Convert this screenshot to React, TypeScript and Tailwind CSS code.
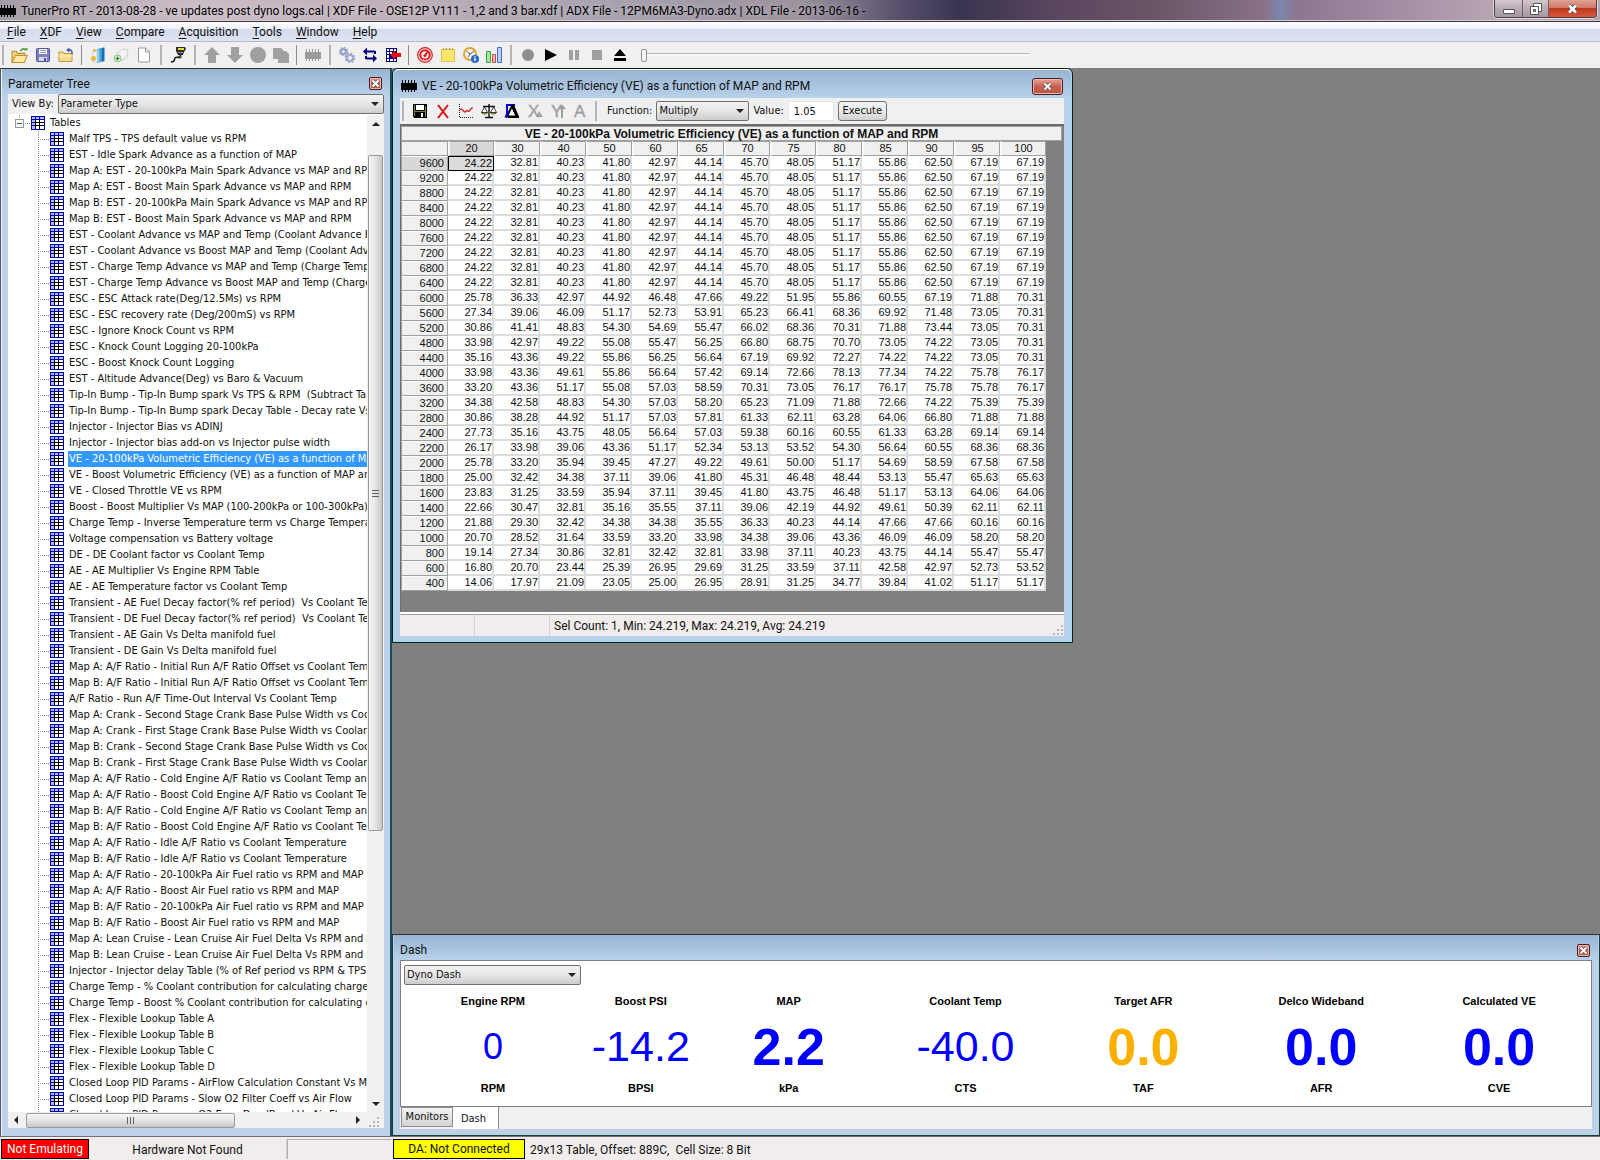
import type { ReactNode } from "react";

const TREE_ITEMS = [
  "Malf TPS - TPS default value vs RPM",
  "EST - Idle Spark Advance as a function of MAP",
  "Map A: EST - 20-100kPa Main Spark Advance vs MAP and RPM",
  "Map A: EST - Boost Main Spark Advance vs MAP and RPM",
  "Map B: EST - 20-100kPa Main Spark Advance vs MAP and RPM",
  "Map B: EST - Boost Main Spark Advance vs MAP and RPM",
  "EST - Coolant Advance vs MAP and Temp (Coolant Advance Bias)",
  "EST - Coolant Advance vs Boost MAP and Temp (Coolant Advance)",
  "EST - Charge Temp Advance vs MAP and Temp (Charge Temp Bias)",
  "EST - Charge Temp Advance vs Boost MAP and Temp (Charge Temp)",
  "ESC - ESC Attack rate(Deg/12.5Ms) vs RPM",
  "ESC - ESC recovery rate (Deg/200mS) vs RPM",
  "ESC - Ignore Knock Count vs RPM",
  "ESC - Knock Count Logging 20-100kPa",
  "ESC - Boost Knock Count Logging",
  "EST - Altitude Advance(Deg) vs Baro & Vacuum",
  "Tip-In Bump - Tip-In Bump spark Vs TPS & RPM  (Subtract Table)",
  "Tip-In Bump - Tip-In Bump spark Decay Table - Decay rate Vs TPS",
  "Injector - Injector Bias vs ADINJ",
  "Injector - Injector bias add-on vs Injector pulse width",
  "VE - 20-100kPa Volumetric Efficiency (VE) as a function of MAP",
  "VE - Boost Volumetric Efficiency (VE) as a function of MAP and",
  "VE - Closed Throttle VE vs RPM",
  "Boost - Boost Multiplier Vs MAP (100-200kPa or 100-300kPa)",
  "Charge Temp - Inverse Temperature term vs Charge Temperature",
  "Voltage compensation vs Battery voltage",
  "DE - DE Coolant factor vs Coolant Temp",
  "AE - AE Multiplier Vs Engine RPM Table",
  "AE - AE Temperature factor vs Coolant Temp",
  "Transient - AE Fuel Decay factor(% ref period)  Vs Coolant Temp",
  "Transient - DE Fuel Decay factor(% ref period)  Vs Coolant Temp",
  "Transient - AE Gain Vs Delta manifold fuel",
  "Transient - DE Gain Vs Delta manifold fuel",
  "Map A: A/F Ratio - Initial Run A/F Ratio Offset vs Coolant Temp",
  "Map B: A/F Ratio - Initial Run A/F Ratio Offset vs Coolant Temp",
  "A/F Ratio - Run A/F Time-Out Interval Vs Coolant Temp",
  "Map A: Crank - Second Stage Crank Base Pulse Width vs Coolant",
  "Map A: Crank - First Stage Crank Base Pulse Width vs Coolant",
  "Map B: Crank - Second Stage Crank Base Pulse Width vs Coolant",
  "Map B: Crank - First Stage Crank Base Pulse Width vs Coolant",
  "Map A: A/F Ratio - Cold Engine A/F Ratio vs Coolant Temp and",
  "Map A: A/F Ratio - Boost Cold Engine A/F Ratio vs Coolant Temp",
  "Map B: A/F Ratio - Cold Engine A/F Ratio vs Coolant Temp and",
  "Map B: A/F Ratio - Boost Cold Engine A/F Ratio vs Coolant Temp",
  "Map A: A/F Ratio - Idle A/F Ratio vs Coolant Temperature",
  "Map B: A/F Ratio - Idle A/F Ratio vs Coolant Temperature",
  "Map A: A/F Ratio - 20-100kPa Air Fuel ratio vs RPM and MAP",
  "Map A: A/F Ratio - Boost Air Fuel ratio vs RPM and MAP",
  "Map B: A/F Ratio - 20-100kPa Air Fuel ratio vs RPM and MAP",
  "Map B: A/F Ratio - Boost Air Fuel ratio vs RPM and MAP",
  "Map A: Lean Cruise - Lean Cruise Air Fuel Delta Vs RPM and MAP",
  "Map B: Lean Cruise - Lean Cruise Air Fuel Delta Vs RPM and MAP",
  "Injector - Injector delay Table (% of Ref period vs RPM & TPS)",
  "Charge Temp - % Coolant contribution for calculating charge temp",
  "Charge Temp - Boost % Coolant contribution for calculating charge",
  "Flex - Flexible Lookup Table A",
  "Flex - Flexible Lookup Table B",
  "Flex - Flexible Lookup Table C",
  "Flex - Flexible Lookup Table D",
  "Closed Loop PID Params - AirFlow Calculation Constant Vs MAP",
  "Closed Loop PID Params - Slow O2 Filter Coeff vs Air Flow",
  "Closed Loop PID Params - O2 Error DeadBand Vs Air Flow",
];
const SELECTED_ITEM = 20;

const MAP_AXIS = [20, 30, 40, 50, 60, 65, 70, 75, 80, 85, 90, 95, 100];

const LOW_LOAD = "24.22 32.81 40.23 41.80 42.97 44.14 45.70 48.05 51.17 55.86 62.50 67.19 67.19";
const VE_ROWS: [number, string][] = [
  [9600, LOW_LOAD],
  [9200, LOW_LOAD],
  [8800, LOW_LOAD],
  [8400, LOW_LOAD],
  [8000, LOW_LOAD],
  [7600, LOW_LOAD],
  [7200, LOW_LOAD],
  [6800, LOW_LOAD],
  [6400, LOW_LOAD],
  [6000, "25.78 36.33 42.97 44.92 46.48 47.66 49.22 51.95 55.86 60.55 67.19 71.88 70.31"],
  [5600, "27.34 39.06 46.09 51.17 52.73 53.91 65.23 66.41 68.36 69.92 71.48 73.05 70.31"],
  [5200, "30.86 41.41 48.83 54.30 54.69 55.47 66.02 68.36 70.31 71.88 73.44 73.05 70.31"],
  [4800, "33.98 42.97 49.22 55.08 55.47 56.25 66.80 68.75 70.70 73.05 74.22 73.05 70.31"],
  [4400, "35.16 43.36 49.22 55.86 56.25 56.64 67.19 69.92 72.27 74.22 74.22 73.05 70.31"],
  [4000, "33.98 43.36 49.61 55.86 56.64 57.42 69.14 72.66 78.13 77.34 74.22 75.78 76.17"],
  [3600, "33.20 43.36 51.17 55.08 57.03 58.59 70.31 73.05 76.17 76.17 75.78 75.78 76.17"],
  [3200, "34.38 42.58 48.83 54.30 57.03 58.20 65.23 71.09 71.88 72.66 74.22 75.39 75.39"],
  [2800, "30.86 38.28 44.92 51.17 57.03 57.81 61.33 62.11 63.28 64.06 66.80 71.88 71.88"],
  [2400, "27.73 35.16 43.75 48.05 56.64 57.03 59.38 60.16 60.55 61.33 63.28 69.14 69.14"],
  [2200, "26.17 33.98 39.06 43.36 51.17 52.34 53.13 53.52 54.30 56.64 60.55 68.36 68.36"],
  [2000, "25.78 33.20 35.94 39.45 47.27 49.22 49.61 50.00 51.17 54.69 58.59 67.58 67.58"],
  [1800, "25.00 32.42 34.38 37.11 39.06 41.80 45.31 46.48 48.44 53.13 55.47 65.63 65.63"],
  [1600, "23.83 31.25 33.59 35.94 37.11 39.45 41.80 43.75 46.48 51.17 53.13 64.06 64.06"],
  [1400, "22.66 30.47 32.81 35.16 35.55 37.11 39.06 42.19 44.92 49.61 50.39 62.11 62.11"],
  [1200, "21.88 29.30 32.42 34.38 34.38 35.55 36.33 40.23 44.14 47.66 47.66 60.16 60.16"],
  [1000, "20.70 28.52 31.64 33.59 33.20 33.98 34.38 39.06 43.36 46.09 46.09 58.20 58.20"],
  [800, "19.14 27.34 30.86 32.81 32.42 32.81 33.98 37.11 40.23 43.75 44.14 55.47 55.47"],
  [600, "16.80 20.70 23.44 25.39 26.95 29.69 31.25 33.59 37.11 42.58 42.97 52.73 53.52"],
  [400, "14.06 17.97 21.09 23.05 25.00 26.95 28.91 31.25 34.77 39.84 41.02 51.17 51.17"],
];

const SEGOE = "font-[Roboto,'Open_Sans',sans-serif] text-[12px]";
const TAHOMA = "font-['DejaVu_Sans_Condensed','DejaVu_Sans',sans-serif] text-[11px]";

/* ---------- icons ---------- */

function Icon({ children, crisp = true, size = 16 }: { children: ReactNode; crisp?: boolean; size?: number }) {
  return (
    <svg width={size} height={size} viewBox="0 0 16 16" fill="none" shapeRendering={crisp ? "crispEdges" : "auto"} aria-hidden="true" className="shrink-0">
      {children}
    </svg>
  );
}

function ChipIcon({ color = "#000" }: { color?: string }) {
  return (
    <Icon>
      <path fill={color} d="M0 5h16v7H0zM1 2h1v3H1zM4 2h1v3H4zM7 2h1v3H7zM10 2h1v3h-1zM13 2h1v3h-1zM1 12h1v2H1zM4 12h1v2H4zM7 12h1v2H7zM10 12h1v2h-1zM13 12h1v2h-1z" />
    </Icon>
  );
}

function TableIcon() {
  return (
    <svg width="14" height="14" viewBox="0 0 14 14" shapeRendering="crispEdges" aria-hidden="true" className="shrink-0">
      <path fill="#0000a8" d="M0 0h14v14H0z" />
      <path fill="#b4bcf4" d="M1 1h3v2H1zM5 1h3v2H5zM9 1h4v2H9zM1 4h3v2H1zM1 7h3v2H1zM1 10h3v3H1z" />
      <path fill="#000" d="M4 4h9v9H4z" />
      <path fill="#fff" d="M5 4h3v2H5zM9 4h4v2H9zM5 7h3v2H5zM9 7h4v2H9zM5 10h3v3H5zM9 10h4v3H9z" />
    </svg>
  );
}

function OpenFolderIcon() {
  return (
    <Icon crisp={false} size={17}>
      <path d="M1 14V4h4l1 2h7v3" fill="#f4d57c" stroke="#b98a2c" />
      <path d="M1 14.5 4 8h11.5l-3 6.5z" fill="#fde9a5" stroke="#c0912f" />
      <path d="M9 4c1-3 4-3 5-1" stroke="#3f9a3c" strokeWidth="1.5" />
      <path d="M12 3h3.500v-2.500z" fill="#3f9a3c" />
    </Icon>
  );
}

function SaveIcon() {
  return (
    <Icon crisp={false}>
      <rect x="1.500" y="1.500" width="13" height="13" rx="1" fill="#7c7fc4" stroke="#5053a0" />
      <path fill="#fff" d="M4 2h8v5H4z" />
      <path d="M5 3.500h6M5 5.500h6" stroke="#9a9ab0" />
      <path fill="#d6d8ea" d="M4 10h8v4H4z" />
      <path fill="#5053a0" d="M9 11h2v3H9z" />
    </Icon>
  );
}

function ImportFolderIcon() {
  return (
    <Icon crisp={false}>
      <path d="M1 14.500V5h4l1 1.500h8v8z" fill="#f7dd8c" stroke="#c2953a" />
      <path d="M1 9h13" stroke="#fff3c8" />
      <path d="M14 7c.5-3-1-5-4-4" stroke="#4b5aa8" strokeWidth="1.500" />
      <path fill="#4b5aa8" d="m8 3 3.500-2.500v5z" />
    </Icon>
  );
}

function BinderIcon() {
  return (
    <Icon crisp={false}>
      <path fill="#3d9ad6" d="m7 2 7-1.500V14l-7 2z" />
      <path fill="#1c6db0" d="m12 1 2.500-.500V14L12 14.800z" />
      <path fill="#8fd0f0" d="M6.500 2.500h3V15h-3z" />
      <path fill="#f3f3f3" stroke="#b5b5b5" strokeWidth=".5" d="M3 4h4v11H3z" />
      <circle cx="3.500" cy="11.500" r="2.500" fill="#f0b83c" />
      <circle cx="4.500" cy="3.500" r="1.500" fill="#f0b83c" />
    </Icon>
  );
}

function AddTagIcon() {
  return (
    <Icon crisp={false}>
      <path d="m4 7 6-5 5 1-1 7-6 4z" fill="#f2f2f2" stroke="#cacaca" />
      <circle cx="4.500" cy="11.500" r="3.500" fill="#eef7ea" stroke="#8fb886" />
      <path d="M4.500 9.500v4M2.500 11.500h4" stroke="#3f8f35" strokeWidth="1.500" />
    </Icon>
  );
}

function PageIcon() {
  return (
    <Icon crisp={false}>
      <path d="M2.500 1h7l4 4v10h-11z" fill="#fff" stroke="#9a9a9a" />
      <path d="M9.500 1v4h4" stroke="#9a9a9a" />
    </Icon>
  );
}

function CableIcon() {
  return (
    <Icon crisp={false}>
      <path fill="#2a2a2a" d="M6 0h9l1 2-2 3-1 3H8L6 4z" />
      <path fill="#f2d928" d="M8 1h6v2H8z" />
      <path fill="#999" d="M8 5h5v1H8z" />
      <path d="M10 8c1 4-4 1-5 3s0 4-4 4" stroke="#111" strokeWidth="1.500" />
      <path d="M11 8v3H8" stroke="#444" />
    </Icon>
  );
}

function GearsIcon() {
  return (
    <Icon crisp={false}>
      <circle cx="4.500" cy="4.500" r="2.500" stroke="#8d9dc4" strokeWidth="2" />
      <circle cx="4.500" cy="4.500" r="4" stroke="#8d9dc4" strokeWidth="1.500" strokeDasharray="1.600 1.500" />
      <circle cx="11" cy="11" r="3" stroke="#9daaca" strokeWidth="2" />
      <circle cx="11" cy="11" r="4.600" stroke="#8d9dc4" strokeWidth="1.500" strokeDasharray="1.800 1.800" />
    </Icon>
  );
}

function SwapIcon() {
  return (
    <Icon crisp={false}>
      <path fill="#000080" d="m1 4.500 4-4v3h8v2H5v3zM15 11.500l-4 4v-3H4v-2h7v-3z" />
      <path fill="#000080" d="M12 4h2v3h-2zM3 9h2v3H3z" />
    </Icon>
  );
}

function GridArrowIcon() {
  return (
    <Icon>
      <path fill="#000080" d="M1 1h11v14H1z" />
      <path fill="#fff" d="M2 2h2v2H2zM5 2h3v2H5zM9 2h2v2H9zM2 5h2v2H2zM2 8h2v3H2zM2 12h2v2H2zM5 12h3v2H5zM9 12h2v2H9zM5 5h2v2H5z" />
      <path fill="#f00" d="m5 8 5-5v3h6v4h-6v3z" />
    </Icon>
  );
}

function GaugeIcon() {
  return (
    <Icon crisp={false}>
      <circle cx="8" cy="8" r="7.300" stroke="#e01818" strokeWidth="1.200" />
      <circle cx="8" cy="8" r="4.700" stroke="#e01818" strokeWidth="2" />
      <path d="m7.500 9 3-4" stroke="#e01818" strokeWidth="2" />
      <circle cx="8" cy="8.500" r="1.500" fill="#e01818" />
      <path fill="#fff" d="M6 12h4v2H6z" />
      <path fill="#e01818" d="M6.500 11.500h3v2h-3z" />
    </Icon>
  );
}

function NoteIcon() {
  return (
    <Icon>
      <path fill="#f7e66a" stroke="#d8c450" d="M1.500 2.500h13v12h-13z" />
      <path fill="#a89a48" d="M3 1h1v2H3zM6 1h1v2H6zM9 1h1v2H9zM12 1h1v2h-1z" />
    </Icon>
  );
}

function ClockInfoIcon() {
  return (
    <Icon crisp={false}>
      <circle cx="7" cy="7" r="6" fill="#f4f4f4" stroke="#e3a32e" strokeWidth="2" />
      <path d="M3.500 4 7 7l4-3M7 7l-2 3" stroke="#555" />
      <circle cx="12" cy="12" r="4" fill="#2668cf" />
      <path d="M12 11v3M12 9.200v1" stroke="#fff" strokeWidth="1.500" />
    </Icon>
  );
}

function BarsIcon() {
  return (
    <Icon crisp={false}>
      <path fill="#a4e8a0" stroke="#3aa040" d="M.5 4.500h4v11h-4z" />
      <path fill="#f5b6b0" stroke="#cc4a48" d="M6.500 7.500h3v8h-3z" />
      <path fill="#b6cef8" stroke="#4a70c8" d="M11.500.500h4v15h-4z" />
    </Icon>
  );
}

function FloppyIcon() {
  return (
    <Icon>
      <path fill="#000" d="M1 1h14v14H2l-1-1z" />
      <path fill="#84842c" d="M2 2h1v11H2zM13 3h1v11h-1zM3 8h10v1H3z" />
      <path fill="#fff" d="M4 2h8v5H4zM9 10h2v4H9z" />
    </Icon>
  );
}

function TraceIcon() {
  return (
    <Icon crisp={false}>
      <path d="M1.500 1v13.500H15" stroke="#222" strokeDasharray="1 1" />
      <path d="M2 7c2-3 3 2 5 2s1-3 3-1 2-4 5-3" stroke="#d01818" strokeWidth="1.300" />
    </Icon>
  );
}

function ScalesIcon() {
  return (
    <Icon crisp={false}>
      <path d="M8 1v13M4 14.500h8M2 3.500h12" stroke="#111" strokeWidth="1.400" />
      <path d="m3.500 4-3 5.500h6zM12.500 4l-3 5.500h6z" stroke="#111" fill="#fff" strokeWidth=".800" />
      <path fill="#e6e22a" stroke="#111" strokeWidth=".700" d="M.500 9.500h6c-1 2-5 2-6 0zM9.500 9.500h6c-1 2-5 2-6 0z" />
    </Icon>
  );
}

function DeltaIcon() {
  return (
    <Icon crisp={false}>
      <path fill="#0000d8" d="M2 1h9v2H4v10H2z" />
      <path d="M3 13.500 8 3l5 10.500z" fill="#fff" stroke="#000" strokeWidth="2" />
      <path d="m8.500 2 5 12" stroke="#000" strokeWidth="3" />
      <path d="M1.500 14.500 4 9" stroke="#0000d8" strokeWidth="2" />
      <path d="M4 14h11" stroke="#000" strokeWidth="2" />
    </Icon>
  );
}

function AxisIcon({ letter, children }: { letter: string; children?: ReactNode }) {
  return (
    <Icon crisp={false}>
      <text x="1" y="14" fontSize="17" fontFamily="Liberation Sans" fill="#a0a0a0" stroke="#a0a0a0" strokeWidth=".4">
        {letter}
      </text>
      {children}
    </Icon>
  );
}

function Cross({ color, width = 2 }: { color: string; width?: number }) {
  return (
    <Icon crisp={false}>
      <path d="m3 2 10 13M13 2 3 15" stroke={color} strokeWidth={width} />
    </Icon>
  );
}

function Shape({ d, color = "#a0a0a0" }: { d: string; color?: string }) {
  return (
    <Icon crisp={false}>
      <path fill={color} d={d} />
    </Icon>
  );
}

function Caret({ d, className = "" }: { d: string; className?: string }) {
  return (
    <svg width="8" height="8" viewBox="0 0 8 8" aria-hidden="true" className={className}>
      <path d={d} fill="#222" />
    </svg>
  );
}

function SizeGrip() {
  return (
    <svg width="12" height="12" viewBox="0 0 12 12" shapeRendering="crispEdges" aria-hidden="true">
      <path fill="#b4b4b4" d="M9 1h2v2H9zM5 5h2v2H5zM9 5h2v2H9zM1 9h2v2H1zM5 9h2v2H5zM9 9h2v2H9z" />
    </svg>
  );
}

/* ---------- shared controls ---------- */

function ToolButton({ label, children }: { label: string; children: ReactNode }) {
  return (
    <button type="button" aria-label={label} className="flex h-5 w-[23px] items-center justify-center">
      {children}
    </button>
  );
}

function ToolGroup({ children }: { children: ReactNode }) {
  return (
    <div className="flex h-5 items-center border-l-2 border-[#b4b4b4] pl-1">{children}</div>
  );
}

function Separator() {
  return (
    <div className="flex w-[9px] justify-center">
      <div className="h-5 w-px bg-[#8c8c8c]" />
    </div>
  );
}

function Select({ id, value, className }: { id: string; value: string; className: string }) {
  return (
    <div className={`relative ${className}`}>
      <select
        id={id}
        defaultValue={value}
        className="block h-5 w-full appearance-none rounded-[2px] border border-[#707070] bg-linear-to-b from-[#f2f2f2] via-[#e6e6e6] to-[#cdcdcd] pl-[2px] leading-4"
      >
        <option>{value}</option>
      </select>
      <Caret d="M0 2h8L4 6z" className="pointer-events-none absolute top-[6px] right-[5px]" />
    </div>
  );
}

function CloseButton({ label, className }: { label: string; className: string }) {
  return (
    <button
      type="button"
      aria-label={label}
      className={`flex items-center justify-center border border-[#4c1c20] bg-linear-to-b from-[#e8a49a] via-[#c9604f] to-[#bd5646] shadow-[inset_0_0_0_1px_#e9b8b0] ${className}`}
    >
      <svg width="9" height="9" viewBox="0 0 9 9" aria-hidden="true">
        <path d="m1.500 1.500 6 6m0-6-6 6" stroke="#555" strokeWidth="3.500" />
        <path d="m1.500 1.500 6 6m0-6-6 6" stroke="#fff" strokeWidth="2" />
      </svg>
    </button>
  );
}

/* ---------- top of the window ---------- */

function TitleBar() {
  return (
    <header className="flex h-[22px] justify-between border-b border-[#3c3440] bg-[linear-gradient(90deg,#a39ca6_0%,#cbbcc6_12%,#c0b0ba_24%,#a9a4b0_36%,#9d939f_50%,#5a526e_56%,#3a3450_60%,#5a4660_66%,#6a5566_72%,#806a7e_77%,#8c7088_79%,#7888ac_80%,#8e7592_81%,#a48ca4_87%,#b9a8b4_94%,#b3a4ae_100%)] shadow-[inset_0_-1px_0_#d8ccd4]">
      <div className="flex items-center gap-[5px]">
        <ChipIcon />
        <h1 className="text-[12px] whitespace-pre text-black [text-shadow:0_0_6px_#fff8]">
          TunerPro RT - 2013-08-28 - ve updates post dyno logs.cal | XDF File - OSE12P V111 - 1,2 and 3 bar.xdf | ADX File - 12PM6MA3-Dyno.adx | XDL File - 2013-06-16 -
        </h1>
      </div>
      <div className="mr-[3px] flex h-[18px] shrink-0 overflow-hidden rounded-b-[4px] border border-t-0 border-[#4a4048] shadow-[0_0_0_1px_#e2dade]">
        <button type="button" aria-label="Minimize" className="flex w-7 items-center justify-center border-r border-[#6a6068] bg-linear-to-b from-[#d4c8ce] via-[#b9abb4] to-[#a698a2]">
          <svg width="12" height="12" viewBox="0 0 12 12" aria-hidden="true">
            <path d="M.500 6.500h11v4H.500z" fill="#fff" stroke="#555" />
          </svg>
        </button>
        <button type="button" aria-label="Restore" className="flex w-[26px] items-center justify-center border-r border-[#6a6068] bg-linear-to-b from-[#d4c8ce] via-[#b9abb4] to-[#a698a2]">
          <svg width="12" height="12" viewBox="0 0 12 12" aria-hidden="true">
            <path d="M3.500.500h8v8h-8z" fill="#fff" stroke="#555" />
            <path d="M.500 3.500h8v8h-8z" fill="#fff" stroke="#555" />
            <path d="M3.500 6.500h2v2h-2z" fill="#999" stroke="#555" />
          </svg>
        </button>
        <button type="button" aria-label="Close" className="flex w-[47px] items-center justify-center bg-[linear-gradient(180deg,#dfa294_0%,#d07a68_45%,#bc3a20_50%,#d8583c_100%)]">
          <svg width="11" height="10" viewBox="0 0 11 10" aria-hidden="true">
            <path d="m2 1.500 7 7m0-7-7 7" stroke="#5a4a50" strokeWidth="4" />
            <path d="m2 1.500 7 7m0-7-7 7" stroke="#fff" strokeWidth="2.500" />
          </svg>
        </button>
      </div>
    </header>
  );
}

function MenuBar() {
  const menus = ["File", "XDF", "View", "Compare", "Acquisition", "Tools", "Window", "Help"];
  return (
    <nav className="flex h-5 items-center border-b border-[#b6bccc] bg-[linear-gradient(180deg,#fff_0%,#eef1f8_35%,#d5dbee_40%,#dfe4f4_100%)]">
      {menus.map((m) => (
        <button key={m} type="button" className="px-[7px] leading-4">
          <span className="underline underline-offset-2">{m[0]}</span>
          {m.slice(1)}
        </button>
      ))}
    </nav>
  );
}

function MainToolbar() {
  return (
    <div className="flex h-[26px] items-center gap-[5px] px-[2px]" role="toolbar">
      <ToolGroup>
        <ToolButton label="Open"><OpenFolderIcon /></ToolButton>
        <ToolButton label="Save"><SaveIcon /></ToolButton>
        <ToolButton label="Import"><ImportFolderIcon /></ToolButton>
        <Separator />
        <ToolButton label="Select XDF"><BinderIcon /></ToolButton>
        <ToolButton label="New XDF"><AddTagIcon /></ToolButton>
        <ToolButton label="XDF header"><PageIcon /></ToolButton>
      </ToolGroup>
      <ToolGroup>
        <ToolButton label="Connect"><CableIcon /></ToolButton>
      </ToolGroup>
      <ToolGroup>
        <ToolButton label="Upload"><Shape d="M8 0 16 8h-4v8H4V8H0z" /></ToolButton>
        <ToolButton label="Download"><Shape d="M8 16 0 8h4V0h8v8h4z" /></ToolButton>
        <ToolButton label="Verify"><Shape d="M8 0a8 8 0 1 1 0 16A8 8 0 0 1 8 0z" /></ToolButton>
        <ToolButton label="Copy"><Shape d="M0 1h8l3 3h2l3 3v9H5v-4H0z" /></ToolButton>
        <Separator />
        <ToolButton label="Chip"><ChipIcon color="#9a9a9a" /></ToolButton>
      </ToolGroup>
      <ToolGroup>
        <ToolButton label="Settings"><GearsIcon /></ToolButton>
        <ToolButton label="Acquire"><SwapIcon /></ToolButton>
        <ToolButton label="Tracing"><GridArrowIcon /></ToolButton>
        <Separator />
        <ToolButton label="Dashboards"><GaugeIcon /></ToolButton>
        <ToolButton label="Notes"><NoteIcon /></ToolButton>
        <ToolButton label="History"><ClockInfoIcon /></ToolButton>
        <ToolButton label="Monitors"><BarsIcon /></ToolButton>
      </ToolGroup>
      <ToolGroup>
        <ToolButton label="Record"><Shape d="M8 2a6 6 0 1 1 0 12A6 6 0 0 1 8 2z" color="#8e8e8e" /></ToolButton>
        <ToolButton label="Play"><Shape d="M2 2v12l12-6z" color="#000" /></ToolButton>
        <ToolButton label="Pause"><Shape d="M3 3h4v10H3zM9 3h4v10H9z" /></ToolButton>
        <ToolButton label="Stop"><Shape d="M3 3h10v10H3z" /></ToolButton>
        <ToolButton label="Eject"><Shape d="M8 2 14 9H2zM2 11h12v3H2z" color="#000" /></ToolButton>
      </ToolGroup>
      <input
        type="range"
        aria-label="Playback position"
        defaultValue={0}
        className="ml-[5px] h-4 w-[388px] appearance-none bg-[linear-gradient(180deg,transparent_6px,#b8b8b8_6px,#b8b8b8_7px,#f8f8f8_7px,#f8f8f8_9px,transparent_9px)] [&::-webkit-slider-thumb]:h-[13px] [&::-webkit-slider-thumb]:w-[6px] [&::-webkit-slider-thumb]:appearance-none [&::-webkit-slider-thumb]:rounded-[2px] [&::-webkit-slider-thumb]:border [&::-webkit-slider-thumb]:border-[#909090] [&::-webkit-slider-thumb]:bg-[#f6f6f6]"
      />
    </div>
  );
}

/* ---------- parameter tree ---------- */

function ParameterTree() {
  return (
    <aside className="flex w-[392px] shrink-0 flex-col border-t border-r-2 border-l border-t-[#303438] border-r-[#1c4c58] border-l-[#505860] bg-[#bdd1e9] pr-[6px] pb-[8px] pl-[7px] shadow-[inset_1px_1px_0_#eef4fa]">
      <div className="-mr-[6px] -ml-[6px] flex h-[25px] shrink-0 items-center justify-between bg-linear-to-b from-[#98b4d2] to-[#b9d0e9] pt-1 pr-[8px] pl-[6px]">
        <h2>Parameter Tree</h2>
        <CloseButton label="Close parameter tree" className="size-[13px] rounded-[2px]" />
      </div>
      <div className={`flex h-[20px] shrink-0 items-center gap-1 bg-[#f0f0f0] pl-1 ${TAHOMA}`}>
        <label htmlFor="view-by" className="whitespace-nowrap">View By:</label>
        <Select id="view-by" value="Parameter Type" className="min-w-0 flex-1" />
      </div>
      <div className="flex min-h-0 flex-1 bg-white pt-px">
        <div className={`min-w-0 flex-1 overflow-hidden ${TAHOMA}`} role="tree">
          <div className="flex h-4 items-center pl-[7px]" role="treeitem">
            <svg width="16" height="16" viewBox="0 0 16 16" shapeRendering="crispEdges" aria-hidden="true">
              <path d="M.500 4.500h8v8h-8z" fill="#f8f8f8" stroke="#989898" />
              <path d="M2 8.500h5" stroke="#3c50a0" />
              <path d="M10 8.500h6M4.500 0v4" stroke="#909090" strokeDasharray="1 1" />
            </svg>
            <TableIcon />
            <span className="pl-[5px]">Tables</span>
          </div>
          {TREE_ITEMS.map((item, i) => (
            <div key={item} className="flex h-4 items-center pl-[30px]" role="treeitem">
              <svg width="12" height="16" viewBox="0 0 12 16" shapeRendering="crispEdges" aria-hidden="true" className="shrink-0">
                <path d="M.500 0v16M2 8.500h10" stroke="#909090" strokeDasharray="1 1" />
              </svg>
              <TableIcon />
              <span
                className={
                  i === SELECTED_ITEM
                    ? "ml-1 bg-[#3399ff] pl-px leading-4 whitespace-pre text-white"
                    : "ml-1 pl-px leading-4 whitespace-pre"
                }
              >
                {item}
              </span>
            </div>
          ))}
        </div>
        <div className="flex w-[17px] shrink-0 flex-col items-center bg-[#f1f1f1] pt-[5px] pb-1">
          <Caret d="M0 6h8L4 2z" />
          <div className="mt-[27px] flex w-[15px] flex-[677] flex-col items-center justify-center gap-[2px] rounded-[2px] border border-[#9a9a9a] bg-linear-to-r from-[#f6f6f6] via-[#e4e4e4] to-[#c6c6c6]">
            <div className="h-px w-[7px] bg-[#606060]" />
            <div className="h-px w-[7px] bg-[#606060]" />
            <div className="h-px w-[7px] bg-[#606060]" />
          </div>
          <div className="flex-[270]" />
          <Caret d="M0 2h8L4 6z" />
        </div>
      </div>
      <div className="flex h-4 shrink-0 items-center bg-[#f1f1f1] pl-1">
        <Caret d="M6 0v8L2 4z" />
        <div className="ml-[6px] flex h-[15px] flex-[208] items-center justify-center gap-[2px] rounded-[2px] border border-[#9a9a9a] bg-linear-to-b from-[#f6f6f6] via-[#e4e4e4] to-[#c6c6c6]">
          <div className="h-[7px] w-px bg-[#606060]" />
          <div className="h-[7px] w-px bg-[#606060]" />
          <div className="h-[7px] w-px bg-[#606060]" />
        </div>
        <div className="flex-[120]" />
        <Caret d="M2 0v8l4-4z" />
        <div className="flex w-[22px] justify-end self-end pr-1">
          <SizeGrip />
        </div>
      </div>
    </aside>
  );
}

/* ---------- table editor ---------- */

function TableToolbar() {
  return (
    <div className={`flex h-[26px] items-center gap-[3px] bg-[#f0f0f0] pl-[2px] ${TAHOMA}`}>
      <ToolGroup>
        <ToolButton label="Save table"><FloppyIcon /></ToolButton>
        <ToolButton label="Discard"><Cross color="#dc1010" /></ToolButton>
        <ToolButton label="Graph"><TraceIcon /></ToolButton>
        <ToolButton label="Compare"><ScalesIcon /></ToolButton>
        <ToolButton label="Difference"><DeltaIcon /></ToolButton>
        <ToolButton label="Edit X axis">
          <AxisIcon letter="X"><path fill="#a0a0a0" d="m12 8 4 6H9z" /></AxisIcon>
        </ToolButton>
        <ToolButton label="Edit Y axis">
          <AxisIcon letter="Y"><path d="M12 15V3M9.500 6 12 3l3 3" stroke="#a0a0a0" strokeWidth="2" /></AxisIcon>
        </ToolButton>
        <ToolButton label="Annotate"><AxisIcon letter="A" /></ToolButton>
      </ToolGroup>
      <div className="flex h-5 items-center gap-[4px] border-l-2 border-[#b4b4b4] pl-[10px]">
        <label htmlFor="function">Function:</label>
        <Select id="function" value="Multiply" className="w-[93px]" />
        <label htmlFor="value">Value:</label>
        <input id="value" defaultValue="1.05" className="h-5 w-[46px] border border-[#e4e4e4] bg-white pl-[5px]" />
        <button type="button" className="h-5 w-[49px] rounded-[3px] border border-[#707070] bg-linear-to-b from-[#f4f4f4] via-[#eaeaea] to-[#d0d0d0] leading-4">
          Execute
        </button>
      </div>
    </div>
  );
}

function VeGrid() {
  return (
    <div className="border-t-2 border-l border-[#6c6c6c] bg-[#808080] pb-[21px] font-['Liberation_Sans',Arial,sans-serif] text-[11px] leading-[13px]">
      <h3 className="mr-[2px] h-[15px] border border-[#a0a0a0] bg-[#f0f0f0] text-center text-[12px] leading-[14px] font-bold whitespace-nowrap">
        VE - 20-100kPa Volumetric Efficiency (VE) as a function of MAP and RPM
      </h3>
      <table className="w-[645px] table-fixed border-separate border-spacing-0 bg-[#dcdcdc]">
        <thead>
          <tr className="h-[15px]">
            <th className="w-[47px] border border-[#a0a0a0] bg-[#f0f0f0] p-0" />
            {MAP_AXIS.map((v) => (
              <th
                key={v}
                scope="col"
                className={
                  v === 20
                    ? "border border-l-2 border-[#a0a0a0] border-l-[#fafafa] bg-[#d8d8d8] p-0 font-normal"
                    : "border border-l-2 border-[#a0a0a0] border-l-[#fafafa] bg-[#f0f0f0] p-0 font-normal"
                }
              >
                {v}
              </th>
            ))}
          </tr>
        </thead>
        <tbody>
          {VE_ROWS.map(([rpm, values]) => (
            <tr key={rpm} className="h-[15px]">
              <th
                scope="row"
                className={
                  rpm === 9600
                    ? "border border-t-[#fafafa] border-r-[#a0a0a0] border-b-[#a0a0a0] border-l-[#a0a0a0] bg-[#d8d8d8] p-0 pr-[3px] text-right font-normal"
                    : "border border-t-[#fafafa] border-r-[#a0a0a0] border-b-[#a0a0a0] border-l-[#a0a0a0] bg-[#f0f0f0] p-0 pr-[3px] text-right font-normal"
                }
              >
                {rpm}
              </th>
              {values.split(" ").map((v, i) => (
                <td
                  key={i}
                  className={
                    rpm === 9600 && i === 0
                      ? "border border-black bg-[#dcdcdc] p-0 pr-px text-right"
                      : "border-r-2 border-b-2 border-[#dcdcdc] bg-white p-0 text-right"
                  }
                >
                  {v}
                </td>
              ))}
            </tr>
          ))}
        </tbody>
      </table>
    </div>
  );
}

function TableWindow() {
  return (
    <section className="w-[681px] rounded-t-[6px] border border-[#101820] bg-[#b9d1ea] pr-[8px] pb-[6px] pl-[7px] shadow-[inset_0_0_0_1px_#8fe0f0]">
      <div className="-mr-[7px] -ml-[6px] flex h-[29px] items-center justify-between rounded-t-[5px] border-t border-white bg-linear-to-b from-[#98b4d2] to-[#b9d1ea] pt-1 pr-[8px] pl-[7px]">
        <div className="flex items-center gap-[5px]">
          <ChipIcon />
          <h2 className="whitespace-nowrap">VE - 20-100kPa Volumetric Efficiency (VE) as a function of MAP and RPM</h2>
        </div>
        <CloseButton label="Close table" className="h-[17px] w-[31px] rounded-[3px]" />
      </div>
      <TableToolbar />
      <VeGrid />
      <div className="flex h-[24px] border-t-2 border-white bg-[#f1edec]">
        <div className="w-[75px] border-t border-r border-t-[#a0a0a0] border-r-[#d4d4d4]" />
        <div className="w-[75px] border-t border-r border-t-[#a0a0a0] border-r-[#d4d4d4]" />
        <p className="flex flex-1 items-center border-t border-[#a0a0a0] pl-1">Sel Count: 1, Min: 24.219, Max: 24.219, Avg: 24.219</p>
        <div className="flex items-end border-t border-[#a0a0a0]">
          <SizeGrip />
        </div>
      </div>
    </section>
  );
}

/* ---------- dash ---------- */

function Gauge({ label, unit, children }: { label: string; unit: string; children: ReactNode }) {
  return (
    <div className="flex flex-col items-center">
      <p className="text-[11px] leading-4 font-bold">{label}</p>
      <div className="flex h-[71px] items-center pt-1">{children}</div>
      <p className="text-[11px] leading-4 font-bold">{unit}</p>
    </div>
  );
}

function DashPanel() {
  return (
    <section className="border border-[#2c3438] bg-[#bdd1e9] px-[7px] pb-[6px] shadow-[inset_0_0_0_1px_#9fdcec]">
      <div className="-mx-[6px] flex h-[25px] items-center justify-between bg-linear-to-b from-[#98b4d2] to-[#b9d1ea] pt-[5px] pr-[8px] pl-[6px]">
        <h2>Dash</h2>
        <CloseButton label="Close dash" className="size-[13px] rounded-[2px]" />
      </div>
      <div className="h-[147px] border border-[#808080] bg-white pt-1">
        <label htmlFor="dash" className="sr-only">Dash</label>
        <div className={TAHOMA}>
          <Select id="dash" value="Dyno Dash" className="ml-[3px] w-[177px]" />
        </div>
        <div className="grid grid-cols-[18fr_148fr_148fr_148fr_14fr_178fr_178fr_178fr_178fr_3fr] pt-2 font-['Liberation_Sans',Arial,sans-serif] text-black">
          <div />
          <Gauge label="Engine RPM" unit="RPM"><span className="text-[36px] text-[#0000ff]">0</span></Gauge>
          <Gauge label="Boost PSI" unit="BPSI"><span className="text-[43px] text-[#0000ff]">-14.2</span></Gauge>
          <Gauge label="MAP" unit="kPa"><span className="text-[52px] font-bold text-[#0000ff]">2.2</span></Gauge>
          <div />
          <Gauge label="Coolant Temp" unit="CTS"><span className="text-[43px] text-[#0000ff]">-40.0</span></Gauge>
          <Gauge label="Target AFR" unit="TAF"><span className="text-[52px] font-bold text-[#fbb000]">0.0</span></Gauge>
          <Gauge label="Delco Wideband" unit="AFR"><span className="text-[52px] font-bold text-[#0000ff]">0.0</span></Gauge>
          <Gauge label="Calculated VE" unit="CVE"><span className="text-[52px] font-bold text-[#0000ff]">0.0</span></Gauge>
        </div>
      </div>
      <div className={`flex h-[22px] bg-[#f0f0f0] pl-px ${TAHOMA}`} role="tablist">
        <button type="button" role="tab" aria-selected="false" className="h-5 w-[52px] border border-[#8c8c8c] bg-linear-to-b from-[#f2f2f2] to-[#d4d4d4] leading-4">
          Monitors
        </button>
        <button type="button" role="tab" aria-selected="true" className="h-[22px] w-[46px] border-r border-[#8c8c8c] bg-white pt-[3px] pr-[4px]">
          Dash
        </button>
      </div>
    </section>
  );
}

function StatusBar() {
  return (
    <footer className="flex h-6 shrink-0 items-end border-t border-[#707070] bg-[#f1edec] px-px pb-px">
      <div className="flex h-5 w-[88px] items-center justify-center border border-black bg-[#ff0000] text-white">Not Emulating</div>
      <div className="flex h-5 w-[198px] items-center justify-center border-r border-[#d0d0d0] pt-px">Hardware Not Found</div>
      <div className="h-5 w-[104px] border-t border-l border-[#b0b0b0]" />
      <div className="ml-[2px] flex h-5 w-[132px] items-center justify-center border border-black bg-[#ffff00]">DA: Not Connected</div>
      <p className="h-5 pt-px pl-[5px] leading-5 whitespace-pre">29x13 Table, Offset: 889C,  Cell Size: 8 Bit</p>
    </footer>
  );
}

export default function App() {
  return (
    <div className={`flex h-screen flex-col overflow-hidden bg-[#f0f0f0] text-[#101010] ${SEGOE}`}>
      <TitleBar />
      <MenuBar />
      <MainToolbar />
      <div className="flex min-h-0 flex-1">
        <ParameterTree />
        <main className="flex min-w-0 flex-1 flex-col justify-between bg-[#808080]">
          <TableWindow />
          <DashPanel />
        </main>
      </div>
      <StatusBar />
    </div>
  );
}
